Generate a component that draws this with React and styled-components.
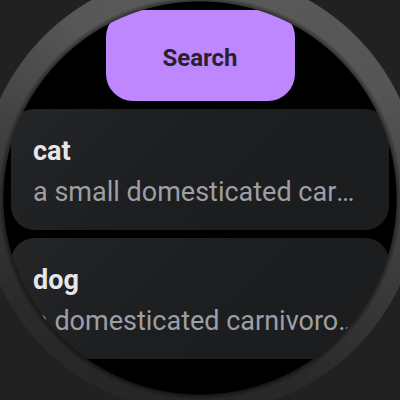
import React from 'react';
import styled, { createGlobalStyle } from 'styled-components';

const GlobalStyle = createGlobalStyle`
  html, body {
    margin: 0;
    padding: 0;
    background: #212121;
  }
`;

const items = [
  { title: 'cat', text: 'a small domesticated carnivorous mammal' },
  { title: 'dog', text: 'a domesticated carnivorous mammal' },
];

const WatchFace = () => {
  return (
    <Screen>
      <GlobalStyle />
      <List>
        <SearchButton>Search</SearchButton>
        {items.map((item) => (
          <Card key={item.title}>
            <Title>{item.title}</Title>
            <Description>{item.text}</Description>
          </Card>
        ))}
      </List>
      {/* round bezel drawn over the list */}
      <Bezel />
    </Screen>
  );
};

const Screen = styled.div`
  position: relative;
  width: 400px;
  height: 400px;
  overflow: hidden;
  background: #000;
  font-family: Roboto, 'Liberation Sans', sans-serif;
`;

const List = styled.div`
  display: flex;
  flex-direction: column;
  align-items: center;
  gap: 8px;
  padding-top: 10px;
`;

const SearchButton = styled.button`
  width: 189px;
  height: 91px;
  border: none;
  border-radius: 27px;
  background: #bf87fd;
  color: #282230;
  font-family: inherit;
  font-size: 24px;
  font-weight: 700;
  padding: 5px 0 0;
  cursor: pointer;
`;

const Card = styled.div`
  box-sizing: border-box;
  width: 378px;
  height: 121px;
  padding: 26px 22px 0;
  border-radius: 24px;
  background: linear-gradient(135deg, #242527 0%, #1d1e20 45%, #1b1c1e 100%);
  display: flex;
  flex-direction: column;
  gap: 9px;
`;

const Title = styled.div`
  color: #e6e6e8;
  font-size: 27px;
  font-weight: 700;
  line-height: 32px;
`;

const Description = styled.div`
  color: #9d9fa4;
  font-size: 27px;
  line-height: 32px;
  white-space: nowrap;
  overflow: hidden;
  text-overflow: ellipsis;
`;

const Bezel = styled.div`
  position: absolute;
  inset: 0;
  pointer-events: none;
  background:
    radial-gradient(circle at 200px 198px, rgba(0, 0, 0, 0.5) 196px, rgba(0, 0, 0, 0) 202px),
    radial-gradient(circle at 200px 192px, transparent 220px, #212121 221px),
    conic-gradient(from 0deg at 200px 198px, #5a5a5a, #555 60deg, #3c3c3c 110deg, #292929 150deg, #262626 200deg, #2a2a2a 240deg, #3e3e3e 285deg, #575757 325deg, #5a5a5a);
  -webkit-mask-image: radial-gradient(circle at 200px 198px, transparent 196px, #000 197px);
  mask-image: radial-gradient(circle at 200px 198px, transparent 196px, #000 197px);
`;

export default WatchFace;
